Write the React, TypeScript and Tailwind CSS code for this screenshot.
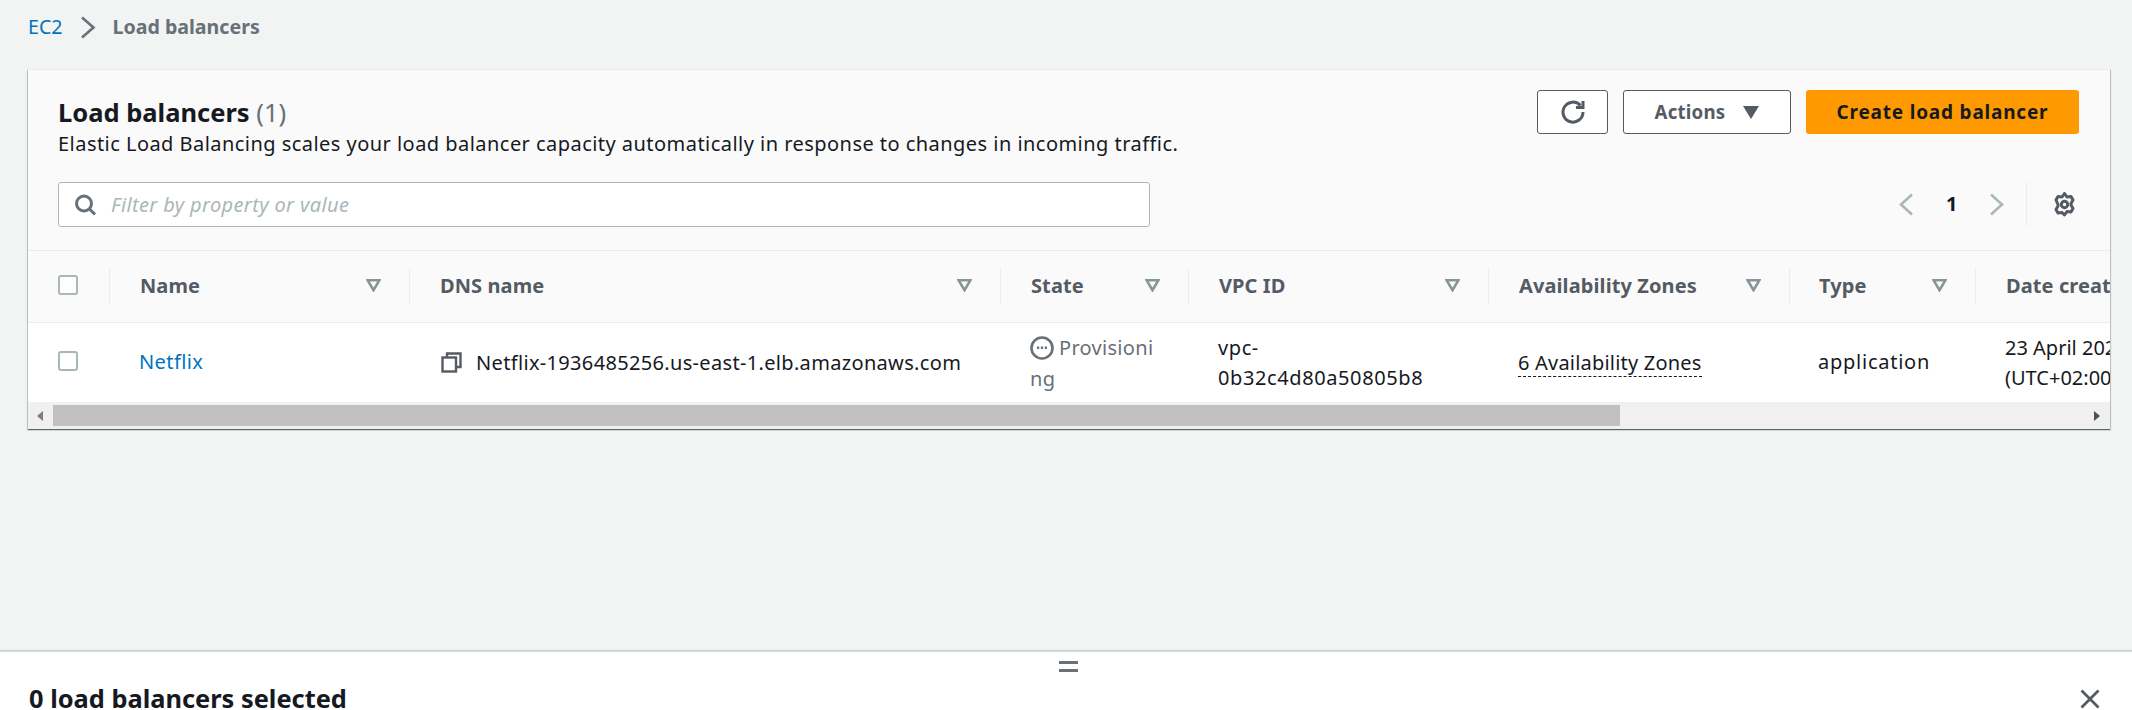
import React from "react";

const Filter = () => (
  <svg width="15" height="13" viewBox="0 0 15 13" className="shrink-0">
    <path d="M1.700 1.300h11.600L7.500 11.200z" fill="none" stroke="#879596" strokeWidth="2.600" strokeLinejoin="miter" />
  </svg>
);

const Box = () => <div className="w-[20px] h-[20px] rounded-[3px] border-2 border-[#aab7b8] bg-white shrink-0" />;
const Divider = () => <div className="w-px h-[35px] bg-[#eaeded] shrink-0" />;

function Head({ label, w, filter = true, pl = "pl-[30px]" }: { label: string; w: string; filter?: boolean; pl?: string }) {
  return (
    <div className={`${w} ${pl} shrink-0 flex items-center justify-between pr-[28px] pb-[2px] font-bold text-[#545b64] tracking-[0.1px]`}>
      <span className="whitespace-nowrap">{label}</span>
      {filter && <Filter />}
    </div>
  );
}

export default function App() {
  return (
    <div className="h-[710px] w-[2132px] overflow-hidden flex flex-col bg-[#f2f3f3] text-[20px] text-[#16191f] font-['Noto_Sans',sans-serif]">
      <nav className="h-[69px] shrink-0 flex items-center pl-[28px] pb-[15px] text-[19.6px]">
        <span className="text-[#0073bb]">EC2</span>
        <svg width="16" height="23" viewBox="0 0 16 23" className="ml-[17px] mr-[17px]">
          <path d="M2 1.500 13.500 11.500 2 21.500" fill="none" stroke="#687078" strokeWidth="2.600" />
        </svg>
        <span className="font-bold text-[#687078]">Load balancers</span>
      </nav>

      <section className="ml-[28px] w-[2082px] h-[360px] shrink-0 bg-[#fafafa] border-t border-[#eaeded] shadow-[0_1px_1px_0_rgba(0,28,36,0.5),1px_1px_1px_0_rgba(0,28,36,0.15),-1px_1px_1px_0_rgba(0,28,36,0.15)] flex flex-col overflow-hidden">
        <header className="h-[180px] shrink-0 flex justify-between pl-[30px] pr-[31px]">
          <div className="pt-[25px]">
            <h1 className="text-[25.5px] leading-[34px] font-bold whitespace-nowrap">
              Load balancers <span className="font-normal text-[#687078]">(1)</span>
            </h1>
            <p className="leading-[27px] mt-[1px] whitespace-nowrap tracking-[0.46px]">
              Elastic Load Balancing scales your load balancer capacity automatically in response to changes in incoming traffic.
            </p>
            <div className="mt-[25px] w-[1092px] h-[45px] bg-white border border-[#aab7b8] rounded-[3px] flex items-center pl-[15px]">
              <svg width="23" height="22" viewBox="0 0 23 22" fill="none" stroke="#687078" strokeWidth="3">
                <circle cx="10" cy="9.500" r="7.500" />
                <path d="M15.500 15 21 20.500" />
              </svg>
              <span className="ml-[14px] italic text-[#aab7b8] tracking-[0.37px]">Filter by property or value</span>
            </div>
          </div>
          <div className="flex flex-col items-end pt-[20px]">
            <div className="flex gap-[15px]">
              <button className="w-[71px] h-[44px] bg-white border border-[#545b64] rounded-[3px] flex items-center justify-center">
                <svg width="26" height="26" viewBox="0 0 26 26" fill="none" stroke="#545b64" strokeWidth="3">
                  <path d="M20.500 6.500A10 10 0 1 0 23 13" />
                  <path d="M23 2v6.500h-7" strokeLinejoin="miter" />
                </svg>
              </button>
              <button className="w-[168px] h-[44px] bg-white border border-[#545b64] rounded-[3px] flex items-center justify-center gap-[18px] font-bold text-[#545b64] text-[18.67px] tracking-[0.2px]">
                <span>Actions</span>
                <svg width="16" height="13" viewBox="0 0 16 13"><path d="M0 0h16L8 13z" fill="#545b64" /></svg>
              </button>
              <button className="w-[273px] h-[44px] bg-[#ff9900] rounded-[3px] font-bold text-[#16191f] text-[19px] tracking-[0.8px]">Create load balancer</button>
            </div>
            <div className="mt-[48px] h-[44px] flex items-center">
              <svg width="15" height="23" viewBox="0 0 15 23" fill="none" stroke="#aab7b8" strokeWidth="2.600"><path d="M13 1.500 2 11.500l11 10" /></svg>
              <span className="ml-[32px] font-bold w-[10px]">1</span>
              <svg width="15" height="23" viewBox="0 0 15 23" fill="none" stroke="#aab7b8" strokeWidth="2.600" className="ml-[33px]"><path d="M2 1.500 13 11.500l-11 10" /></svg>
              <div className="ml-[22px] w-px h-[44px] bg-[#eaeded]" />
              <svg width="25" height="25" viewBox="0 0 25 25" fill="none" stroke="#545b64" strokeWidth="3" className="ml-[25px] mr-[2px]">
                <path d="M12.500 1.500 15 5l4-.5 2 3.500-2 3.500v1.500l2 3.500-2 3.500-4-.5-2.500 3.500L10 20.500l-4 .5-2-3.500 2-3.500v-1.500L4 8l2-3.500 4 .5z" strokeLinejoin="round" />
                <circle cx="12.500" cy="12.500" r="3.200" />
              </svg>
            </div>
          </div>
        </header>

        <div className="h-[73px] shrink-0 border-y border-[#eaeded] flex items-center overflow-hidden">
          <div className="w-[81px] shrink-0 pl-[30px] pb-[4px]"><Box /></div>
          <Divider />
          <Head label="Name" w="w-[299px]" />
          <Divider />
          <Head label="DNS name" w="w-[590px]" />
          <Divider />
          <Head label="State" w="w-[187px]" />
          <Divider />
          <Head label="VPC ID" w="w-[299px]" />
          <Divider />
          <Head label="Availability Zones" w="w-[300px]" />
          <Divider />
          <Head label="Type" w="w-[185px]" pl="pl-[29px]" />
          <Divider />
          <Head label="Date created" w="w-[300px]" filter={false} />
        </div>

        <div className="h-[79px] shrink-0 bg-white flex items-center overflow-hidden">
          <div className="w-[81px] shrink-0 pl-[30px] pb-[4px]"><Box /></div>
          <div className="w-[300px] shrink-0 pl-[30px] text-[#0073bb] pb-[2px] tracking-[0.4px]">Netflix</div>
          <div className="w-[591px] shrink-0 pl-[32px] flex items-center gap-[14px] whitespace-nowrap tracking-[0.33px]">
            <svg width="21" height="21" viewBox="0 0 21 21" fill="none" stroke="#545b64" strokeWidth="2.400">
              <path d="M6 5V1.500h13.500V15H15" />
              <rect x="1.500" y="5.500" width="13.500" height="14" />
            </svg>
            <span>Netflix-1936485256.us-east-1.elb.amazonaws.com</span>
          </div>
          <div className="w-[188px] shrink-0 pl-[30px] pr-[26px] leading-[31px] text-[#687078] break-all tracking-[0.3px]">
            <svg width="24" height="24" viewBox="0 0 24 24" className="inline-block mr-[5px] align-[-5px]">
              <circle cx="12" cy="12" r="10.500" fill="none" stroke="#687078" strokeWidth="2.600" />
              <path d="M7 10.500h2.200v2.600H7zM10.900 10.500h2.200v2.600h-2.200zM14.800 10.500H17v2.600h-2.200z" fill="#687078" />
            </svg>
            Provisioning
          </div>
          <div className="w-[300px] shrink-0 pl-[30px] leading-[30px] tracking-[0.6px]">vpc-<br />0b32c4d80a50805b8</div>
          <div className="w-[301px] shrink-0 pl-[30px]">
            <span className="border-b border-dashed border-[#16191f] leading-[26px] inline-block whitespace-nowrap tracking-[0.2px]">6 Availability Zones</span>
          </div>
          <div className="w-[186px] shrink-0 pl-[29px] tracking-[0.75px] pb-[2px]">application</div>
          <div className="w-[300px] shrink-0 pl-[30px] leading-[30px] whitespace-nowrap">23 April 2024, 12:41<br />(UTC+02:00)</div>
        </div>

        <div className="flex-1 bg-[#f0f0f0] flex items-center">
          <div className="w-[25px] h-full flex items-center pl-[9px]">
            <svg width="6" height="10" viewBox="0 0 6 10"><path d="M6 0v10L0 5z" fill="#7d7d7d" /></svg>
          </div>
          <div className="w-[1567px] h-[21px] bg-[#c0c0c0]" />
          <div className="flex-1 flex justify-end pr-[10px]">
            <svg width="6" height="10" viewBox="0 0 6 10"><path d="M0 0v10l6-5z" fill="#505050" /></svg>
          </div>
        </div>
      </section>

      <div className="flex-1" />

      <footer className="h-[59px] shrink-0 bg-white border-t border-[#d5dbdb] shadow-[0_-1px_1px_0_rgba(0,28,36,0.15)] flex flex-col relative">
        <div className="flex justify-center pt-[9px] pl-[5px]">
          <div className="w-[19px] h-[11px] border-y-[3px] border-[#687078]" />
        </div>
        <div className="flex justify-between pl-[29px] pr-[32px] mt-[10px] items-start">
          <h2 className="text-[25.4px] leading-[32px] font-bold whitespace-nowrap">0 load balancers selected</h2>
          <svg width="20" height="20" viewBox="0 0 20 20" fill="none" stroke="#545b64" strokeWidth="2.800" className="mt-[7px]">
            <path d="M1.500 1.500l17 17M18.500 1.500l-17 17" />
          </svg>
        </div>
      </footer>
    </div>
  );
}
